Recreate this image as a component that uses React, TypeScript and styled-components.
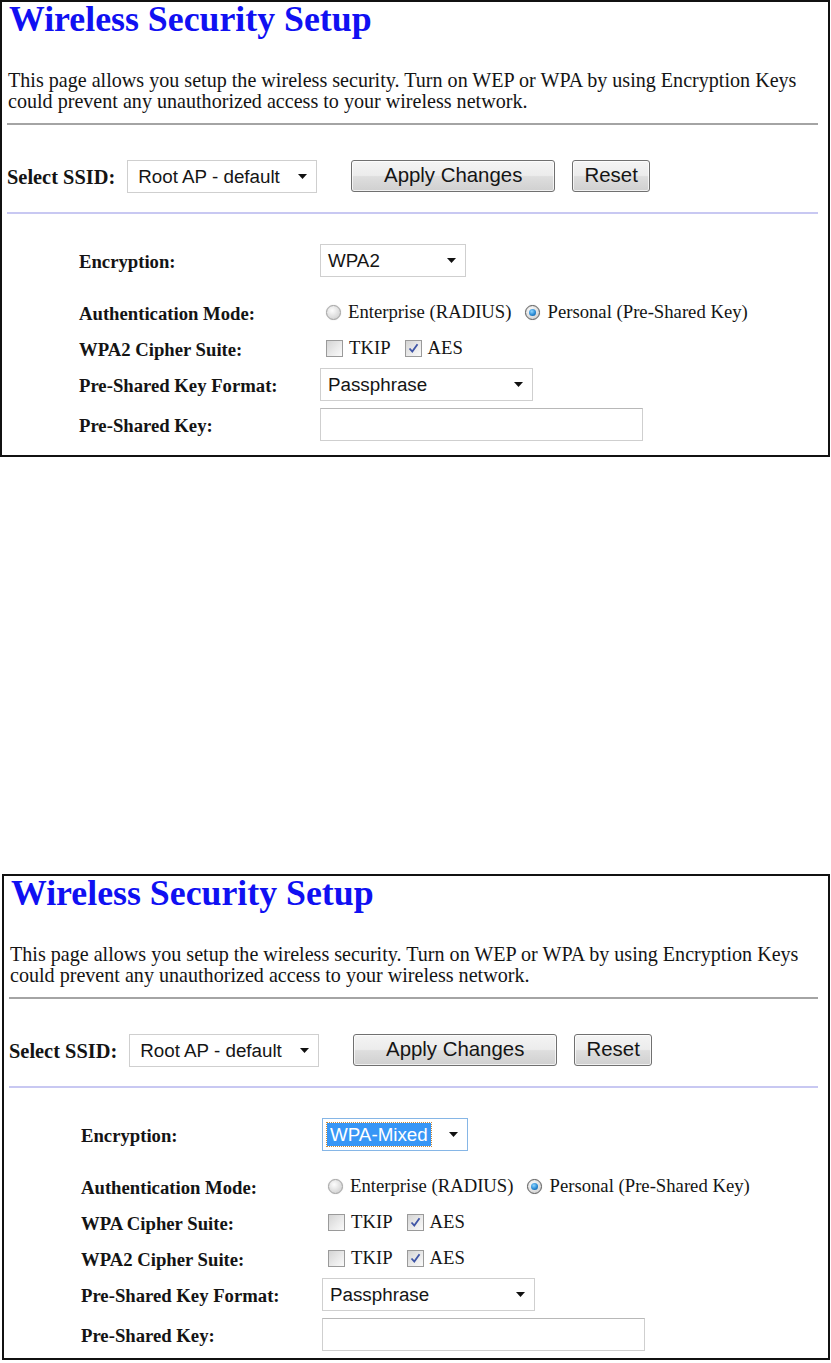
import React from "react";
import styled, { createGlobalStyle } from "styled-components";

const GlobalStyle = createGlobalStyle`
  body {
    margin: 0;
    background: #fff;
  }
`;

const Page = styled.div`
  display: flex;
  flex-direction: column;
  width: 831px;
`;

const Panel = styled.section<{ $offset: number; $top: number; $bottom: number }>`
  box-sizing: border-box;
  width: ${(p) => 830 - p.$offset}px;
  margin-left: ${(p) => p.$offset}px;
  margin-top: ${(p) => p.$top}px;
  border: 2px solid #111;
  padding: 0 10px ${(p) => p.$bottom}px 5px;
  font-family: "Liberation Serif", "Times New Roman", serif;
  color: #141414;
`;

const Title = styled.h1`
  margin: 0 0 0 2px;
  font-size: 35.8px;
  line-height: 34px;
  font-weight: bold;
  color: #1010f2;
`;

const Intro = styled.p`
  margin: 34px 0 0 1px;
  font-size: 20.1px;
  line-height: 21px;
`;

const Rule = styled.div<{ $tone: "grey" | "lavender"; $top: number }>`
  height: 2px;
  margin-top: ${(p) => p.$top}px;
  background: ${(p) => (p.$tone === "grey" ? "#a4a4a4" : "#c8c8f2")};
`;

const Toolbar = styled.div`
  display: flex;
  align-items: center;
  height: 33px;
  margin-top: 35px;
`;

const ToolbarLabel = styled.span`
  font-size: 20.4px;
  font-weight: bold;
  margin-right: 12px;
  padding-top: 2px;
`;

const Button = styled.button<{ $width: number; $gap: number }>`
  box-sizing: border-box;
  width: ${(p) => p.$width}px;
  height: 32px;
  margin-left: ${(p) => p.$gap}px;
  margin-top: -2px;
  border: 1px solid #707070;
  border-radius: 3px;
  background: linear-gradient(#f4f4f4 0%, #ececec 48%, #dedede 52%, #d0d0d0 100%);
  box-shadow: inset 0 0 0 1px rgba(255, 255, 255, 0.7);
  font-family: "Liberation Sans", Arial, sans-serif;
  font-size: 20.4px;
  color: #151515;
  padding: 0;
`;

const SelectBox = styled.div<{ $width: number; $inset: number; $focused?: boolean }>`
  box-sizing: border-box;
  display: flex;
  align-items: center;
  justify-content: space-between;
  width: ${(p) => p.$width}px;
  height: 33px;
  padding: 0 9px 0 ${(p) => p.$inset}px;
  border: 1px solid ${(p) => (p.$focused ? "#86b6e6" : "#cfcfcf")};
  background: #fff;
  font-family: "Liberation Sans", Arial, sans-serif;
  font-size: 18.8px;
  color: #151515;
`;

const SelectValue = styled.span<{ $highlight?: boolean }>`
  padding: 1px 3px;
  line-height: 21px;
  background: ${(p) => (p.$highlight ? "#3796f6" : "transparent")};
  color: ${(p) => (p.$highlight ? "#fff" : "inherit")};
  outline: ${(p) => (p.$highlight ? "1px dotted #c98a3a" : "none")};
`;

const TextInput = styled.div`
  box-sizing: border-box;
  width: 323px;
  height: 33px;
  border: 1px solid #cfcfcf;
  border-top-color: #b8b8b8;
  background: #fff;
`;

const FieldList = styled.div`
  display: flex;
  flex-direction: column;
  padding-left: 72px;
`;

const FieldRow = styled.div<{ $top?: number }>`
  display: grid;
  grid-template-columns: 241px 1fr;
  align-items: center;
  height: 36px;
  margin-top: ${(p) => p.$top ?? 0}px;
`;

const FieldLabel = styled.span`
  font-size: 18.7px;
  font-weight: bold;
  padding-top: 3px;
`;

const OptionGroup = styled.div`
  display: flex;
  align-items: center;
  padding-left: 6px;
  font-size: 18.7px;
`;

const OptionText = styled.span<{ $gap: number }>`
  margin-right: ${(p) => p.$gap}px;
`;

const Radio = styled.span<{ $on?: boolean }>`
  box-sizing: border-box;
  display: inline-flex;
  align-items: center;
  justify-content: center;
  width: 15px;
  height: 15px;
  margin-right: 7px;
  border-radius: 50%;
  border: 1px solid ${(p) => (p.$on ? "#5a5a5a" : "#a0a0a0")};
  background: radial-gradient(circle at 40% 35%, #fdfdfd 0%, #dadada 65%, #c2c2c2 100%);
  box-shadow: 0 0 1px rgba(0, 0, 0, 0.25);

  &::after {
    content: "";
    display: ${(p) => (p.$on ? "block" : "none")};
    width: 7px;
    height: 7px;
    border-radius: 50%;
    background: radial-gradient(circle at 40% 35%, #8fd6ff 0%, #2a8ad4 55%, #0e4f8a 100%);
  }
`;

const CheckBox = styled.span`
  box-sizing: border-box;
  display: inline-flex;
  align-items: center;
  justify-content: center;
  width: 17px;
  height: 17px;
  margin-right: 6px;
  border: 1px solid #9a9a9a;
  background: linear-gradient(135deg, #d4d4d4 0%, #ececec 60%, #fafafa 100%);
`;

const Arrow = () => (
  <svg width="9" height="5" viewBox="0 0 9 5">
    <path d="M0 0h9L4.5 5z" fill="#111" />
  </svg>
);

const Check = ({ on }: { on: boolean }) => (
  <CheckBox>
    {on && (
      <svg width="11" height="11" viewBox="0 0 11 11">
        <path d="M1.5 5.5 L4.3 8.6 L9.5 1.2" fill="none" stroke="#3f55a6" strokeWidth="1.8" />
      </svg>
    )}
  </CheckBox>
);

const CipherOptions = () => (
  <OptionGroup>
    <Check on={false} />
    <OptionText $gap={14}>TKIP</OptionText>
    <Check on />
    <OptionText $gap={0}>AES</OptionText>
  </OptionGroup>
);

type SetupProps = {
  encryption: string;
  mixed?: boolean;
  offset: number;
  top: number;
  bottom: number;
};

const SecuritySetup = ({ encryption, mixed, offset, top, bottom }: SetupProps) => (
  <Panel $offset={offset} $top={top} $bottom={bottom}>
    <Title>Wireless Security Setup</Title>
    <Intro>
      This page allows you setup the wireless security. Turn on WEP or WPA by using Encryption Keys
      <br />
      could prevent any unauthorized access to your wireless network.
    </Intro>
    <Rule $tone="grey" $top={11} />
    <Toolbar>
      <ToolbarLabel>Select SSID:</ToolbarLabel>
      <SelectBox $width={190} $inset={7}>
        <SelectValue>Root AP - default</SelectValue>
        <Arrow />
      </SelectBox>
      <Button $width={204} $gap={34}>Apply Changes</Button>
      <Button $width={78} $gap={17}>Reset</Button>
    </Toolbar>
    <Rule $tone="lavender" $top={19} />
    <FieldList>
      <FieldRow $top={28}>
        <FieldLabel>Encryption:</FieldLabel>
        <SelectBox $width={146} $inset={4} $focused={mixed}>
          <SelectValue $highlight={mixed}>{encryption}</SelectValue>
          <Arrow />
        </SelectBox>
      </FieldRow>
      <FieldRow $top={16}>
        <FieldLabel>Authentication Mode:</FieldLabel>
        <OptionGroup>
          <Radio />
          <OptionText $gap={14}>Enterprise (RADIUS)</OptionText>
          <Radio $on />
          <OptionText $gap={0}>Personal (Pre-Shared Key)</OptionText>
        </OptionGroup>
      </FieldRow>
      {mixed && (
        <FieldRow>
          <FieldLabel>WPA Cipher Suite:</FieldLabel>
          <CipherOptions />
        </FieldRow>
      )}
      <FieldRow>
        <FieldLabel>WPA2 Cipher Suite:</FieldLabel>
        <CipherOptions />
      </FieldRow>
      <FieldRow>
        <FieldLabel>Pre-Shared Key Format:</FieldLabel>
        <SelectBox $width={213} $inset={4}>
          <SelectValue>Passphrase</SelectValue>
          <Arrow />
        </SelectBox>
      </FieldRow>
      <FieldRow $top={4}>
        <FieldLabel>Pre-Shared Key:</FieldLabel>
        <TextInput />
      </FieldRow>
    </FieldList>
  </Panel>
);

export default function App() {
  return (
    <Page>
      <GlobalStyle />
      <SecuritySetup encryption="WPA2" offset={0} top={0} bottom={13} />
      <SecuritySetup encryption="WPA-Mixed" mixed offset={2} top={417} bottom={6} />
    </Page>
  );
}
